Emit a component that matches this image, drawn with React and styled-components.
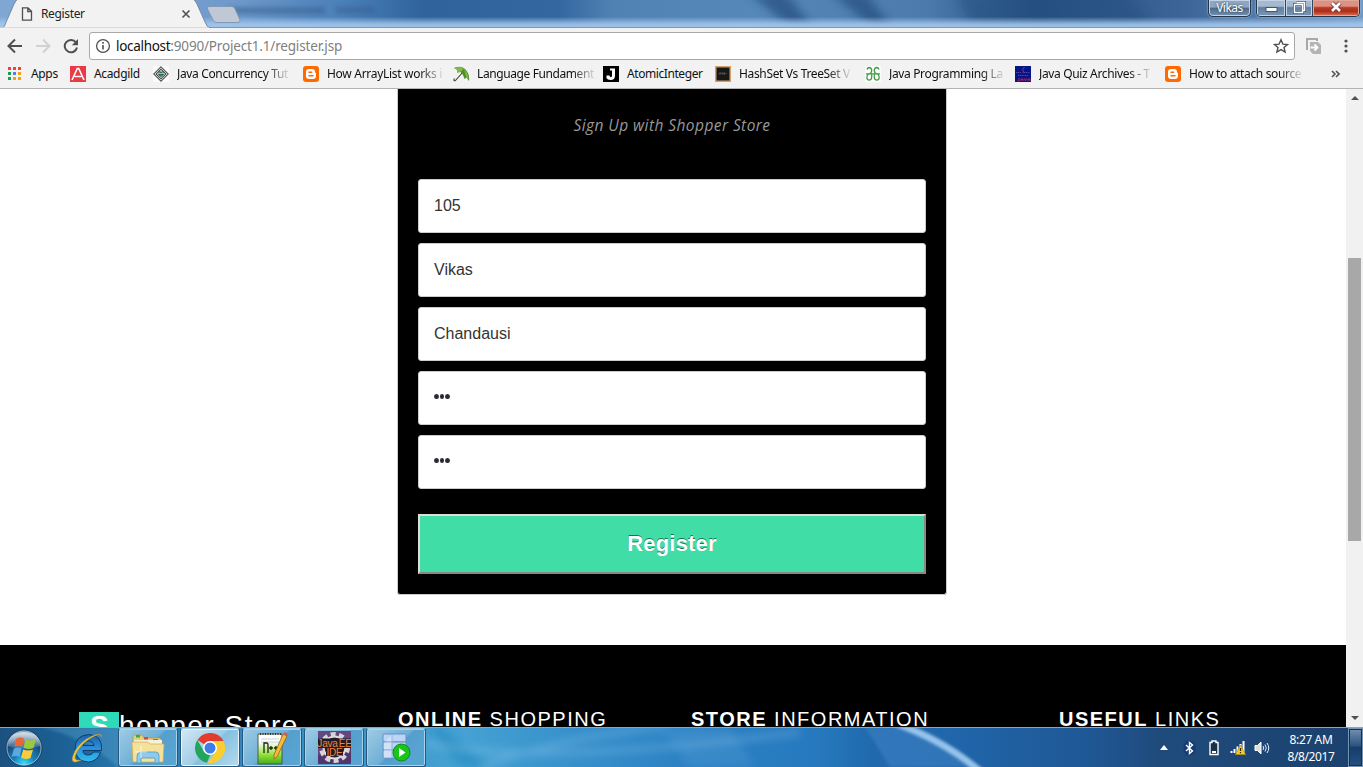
import React from 'react';
import styled, { createGlobalStyle } from 'styled-components';

const ui = '"Noto Sans", "Open Sans", sans-serif';
const arial = '"Liberation Sans", Arial, sans-serif';

const Global = createGlobalStyle`
  * { box-sizing: border-box; }
  html, body { margin: 0; padding: 0; background: #fff; overflow: hidden; }
  svg { display: block; }
`;

const Screen = styled.div`
  width: 1363px;
  height: 767px;
  display: flex;
  flex-direction: column;
  overflow: hidden;
  font-family: ${ui};
`;

/* ---------- window frame ---------- */
const TitleBar = styled.header`
  height: 28px;
  flex: none;
  display: grid;
  overflow: hidden;
  > * { grid-area: 1 / 1; }
`;
const TitleRow = styled.div`
  position: relative;
  display: flex;
  align-items: flex-start;
  height: 28px;
`;
const TabLabel = styled.div`
  width: 205px;
  height: 28px;
  padding: 0 14px 0 21px;
  display: flex;
  align-items: center;
  font-size: 12px;
  letter-spacing: -0.35px;
  color: #222;
  svg { flex: none; }
  span { flex: 1; padding-left: 8px; line-height: 26px; }
`;
const UserButton = styled.div`
  margin-left: auto;
  width: 43px;
  height: 17px;
  border: 1px solid #25364c;
  border-top: 0;
  border-radius: 0 0 5px 5px;
  box-shadow: inset 0 0 0 1px #c3d2e4, 0 0 2px #bcd3ec;
  background: linear-gradient(#8ea6c2 0 45%, #4c6a8c 50%, #7590ae);
  color: #fff;
  font-size: 12px;
  line-height: 15px;
  text-align: center;
  letter-spacing: -0.5px;
  text-shadow: 0 0 2px #1a2a3c;
`;
const WindowButtons = styled.div`
  display: flex;
  margin: 0 3px 0 5px;
  width: 104px;
  height: 17px;
  border: 1px solid #25364c;
  border-top: 0;
  border-radius: 0 0 5px 5px;
  box-shadow: 0 0 2px #bcd3ec;
  overflow: hidden;
`;
const WindowButton = styled.div`
  width: ${p => p.$w}px;
  display: grid;
  place-items: center;
  border-right: ${p => (p.$close ? 0 : 1)}px solid #33475f;
  box-shadow: inset 0 0 0 1px ${p => (p.$close ? '#e0a79b' : '#c3d2e4')};
  background: ${p => p.$close
    ? 'linear-gradient(#dc9183 0 38%, #b93a24 48%, #ad2c17 70%, #d9775b)'
    : 'linear-gradient(#a5bad1 0 38%, #637f9f 48%, #7b97b6)'};
`;

/* ---------- toolbar ---------- */
const Toolbar = styled.div`
  flex: none;
  height: 32px;
  padding: 4px 9px 0 7px;
  display: flex;
  background: #f2f2f2;
`;
const NavIcons = styled.div`
  display: flex;
  align-items: center;
  gap: 12px;
  width: 82px;
  height: 28px;
`;
const Omnibox = styled.div`
  width: 1206px;
  height: 28px;
  display: flex;
  align-items: center;
  padding: 0 5px;
  border: 1px solid #a9a9a9;
  border-radius: 3px;
  background: #fff;
`;
const Url = styled.div`
  flex: 1;
  padding-left: 5px;
  font-size: 13.5px;
  letter-spacing: -0.17px;
  line-height: 24px;
  color: #808080;
  b { font-weight: 400; color: #111; letter-spacing: -0.3px; }
`;
const ToolEnd = styled.div`
  display: flex;
  align-items: center;
  justify-content: space-between;
  height: 28px;
  flex: 1;
  padding: 0 6px 0 11px;
`;
const Bookmarks = styled.nav`
  flex: none;
  height: 29px;
  padding: 0 0 1px 7px;
  display: flex;
  align-items: center;
  background: #f2f2f2;
  border-bottom: 1px solid #b4b4b4;
`;
const Bookmark = styled.div`
  width: ${p => p.$w}px;
  flex: none;
  display: flex;
  align-items: center;
  gap: ${p => p.$gap || 7}px;
  svg { flex: none; }
`;
const BookmarkText = styled.span`
  white-space: nowrap;
  font-size: 12px;
  line-height: 18px;
  letter-spacing: ${p => p.$ls || -0.35}px;
  color: #111;
  ${p => p.$fade && 'mask-image: linear-gradient(90deg, #000 calc(100% - 22px), rgba(0, 0, 0, .12));'}
`;
const More = styled.div`
  margin-left: 20px;
`;

/* ---------- page ---------- */
const Viewport = styled.main`
  flex: none;
  height: 638px;
  display: flex;
  overflow: hidden;
`;
const Page = styled.div`
  width: 1346px;
  height: 638px;
  overflow: hidden;
  background: #fff;
`;
const Card = styled.section`
  width: 550px;
  height: 506px;
  margin: 0 0 50px 397px;
  padding: 0 20px 20px;
  display: flex;
  flex-direction: column;
  background: #000;
  border: 1px solid #ccc;
  border-top: 0;
  border-radius: 0 0 3px 3px;
`;
const Lead = styled.p`
  margin: 0;
  height: 90px;
  padding-top: 24px;
  text-align: center;
  font: italic 15.5px/25px "Open Sans", ${ui};
  letter-spacing: 0.42px;
  color: #999;
`;
const Field = styled.div`
  height: 54px;
  flex: none;
  margin-bottom: 10px;
  padding: 0 15px;
  border: 1px solid #ccc;
  border-radius: 3px;
  background: #fff;
  color: #333;
  font: 16px/51px ${arial};
`;
const Dots = styled.div`
  display: flex;
  gap: 1px;
  padding-top: 22px;
  i { width: 4.6px; height: 5px; border-radius: 50%; background: #2b2b33; }
`;
const Submit = styled.div`
  height: 60px;
  margin-top: 15px;
  flex: none;
  border: 2px solid;
  border-color: #ddd #888 #888 #ddd;
  background: #41dda6;
  color: #fff;
  text-align: center;
  font: bold 22px/55px ${arial};
  letter-spacing: 0.2px;
  text-shadow: 0 -1px 0 rgba(0, 0, 0, .5);
`;
const Footer = styled.footer`
  height: 83px;
  padding: 67px 0 0 79px;
  display: flex;
  background: #000;
  color: #fff;
  overflow: hidden;
`;
const Brand = styled.div`
  width: 319px;
  display: flex;
  font: 28px/28px ${arial};
  letter-spacing: 1.5px;
  b { width: 40px; height: 30px; padding-left: 11px; background: #2fdab8; letter-spacing: 0; }
`;
const FootHeading = styled.h4`
  width: ${p => p.$w}px;
  margin: 0;
  white-space: nowrap;
  font: 20px/15px ${arial};
  letter-spacing: 1.5px;
`;
const Scrollbar = styled.div`
  width: 17px;
  height: 638px;
  padding: 7px 2px;
  display: flex;
  flex-direction: column;
  align-items: center;
  background: #f1f1f1;
`;
const Thumb = styled.div`
  width: 13px;
  height: 283px;
  margin: 158px 0 auto;
  background: #a8a8a8;
`;

/* ---------- taskbar ---------- */
const Taskbar = styled.div`
  height: 40px;
  flex: none;
  display: grid;
  overflow: hidden;
  > * { grid-area: 1 / 1; }
`;
const TaskRow = styled.div`
  position: relative;
  display: flex;
  height: 40px;
  border-top: 1px solid #86a7c1;
`;
const Launch = styled.div`
  width: ${p => p.$w}px;
  padding-left: ${p => p.$pad || 0}px;
  height: 39px;
  display: grid;
  place-items: center;
`;
const TaskButton = styled.div`
  width: 60px;
  height: 39px;
  margin-right: 2px;
  display: grid;
  place-items: center;
  border: 1px solid #24587f;
  border-top-color: #9ecbe6;
  border-radius: 3px;
  box-shadow: inset 0 0 0 1px ${p => (p.$active ? '#eaf5fb' : '#a9d3ea')};
  background: ${p => (p.$active
    ? 'linear-gradient(135deg, #d3e8f4, #a0cde6 48%, #86bfe0 52%, #b4dbee)'
    : 'linear-gradient(135deg, #9fcbe4, #6fb0d7 48%, #549fce 52%, #5aa6d3)')};
`;
const Tray = styled.div`
  margin-left: auto;
  display: flex;
  align-items: center;
`;
const TrayIcon = styled.div`
  width: ${p => p.$w}px;
`;
const Clock = styled.div`
  width: 74px;
  text-align: center;
  color: #fff;
  font-size: 12px;
  line-height: 17px;
  letter-spacing: -0.38px;
`;
const ShowDesktop = styled.div`
  width: 15px;
  height: 39px;
  border: 1px solid #7795b5;
  box-shadow: inset 0 0 0 1px #14304f;
  background: linear-gradient(#7290b0, #2c5582 45%, #173e6c 50%, #24507f);
`;

const FrameArt = () => (
  <svg width="1363" height="28" viewBox="0 0 1363 28">
    <defs>
      <linearGradient id="sky" x2="1">
        <stop offset="0" stopColor="#7fa8d4" /><stop offset=".17" stopColor="#6f9acb" />
        <stop offset=".25" stopColor="#4b80b8" /><stop offset=".31" stopColor="#30639b" />
        <stop offset=".41" stopColor="#3467a0" /><stop offset=".45" stopColor="#5082b4" />
        <stop offset=".55" stopColor="#5688b9" /><stop offset=".68" stopColor="#4c7aac" />
        <stop offset=".76" stopColor="#264f82" /><stop offset=".87" stopColor="#3d6598" />
        <stop offset="1" stopColor="#6f98c5" />
      </linearGradient>
      <linearGradient id="glow" x2="0" y2="1">
        <stop offset=".6" stopColor="#a8cdf3" stopOpacity="0" /><stop offset=".86" stopColor="#a5c8ec" stopOpacity=".85" />
        <stop offset="1" stopColor="#9fc4ea" />
      </linearGradient>
      <filter id="soft" x="-30%" y="-50%" width="160%" height="200%"><feGaussianBlur stdDeviation="5" /></filter>
      <filter id="soft2" x="-10%" y="-80%" width="120%" height="260%"><feGaussianBlur stdDeviation="2.2" /></filter>
    </defs>
    <rect width="1363" height="28" fill="url(#sky)" />
    <g filter="url(#soft)" fill="#214d7e">
      <path d="M748 -8h38l32 42h-20z" opacity=".7" /><path d="M830 -8h35l32 42h-17z" opacity=".7" />
      <path d="M955 -8h170l35 42H975z" opacity=".5" />
    </g>
    <g filter="url(#soft2)" fill="#345d8f" opacity=".5">
      <rect x="228" y="7" width="97" height="7" /><rect x="336" y="7" width="39" height="6" />
    </g>
    <rect width="1363" height="28" fill="url(#glow)" />
    <rect y="27" width="1363" height="1" fill="#7898bc" />
    <path d="M2 28C5 27 5 24 7 20L14 4Q16 0 18 -1H193Q195 0 197 4L205 22Q207 28 211 28Z" fill="#f2f2f2" stroke="#718ba9" />
    <rect x="0" y="27.4" width="209" height="1" fill="#f2f2f2" />
    <path d="M209 6.5H232Q234 6.500 235 9L240 20Q240.500 22.500 238 22.500H217Q214 22.500 213 20L207.500 9Q207 6.500 209 6.500Z" fill="#bfc8d4" stroke="#8199b5" />
  </svg>
);

const Blogger = () => (
  <svg width="16" height="16" viewBox="0 0 16 16">
    <rect width="16" height="16" rx="3" fill="#ff6a00" />
    <path d="M6 3H9Q12 3 12 6Q12 7 13 7V10Q13 13 10 13H6Q3 13 3 10V6Q3 3 6 3Z" fill="#fff" />
    <path d="M6 6.200H8.600M6 9.800H10" stroke="#ff6a00" strokeWidth="1.500" strokeLinecap="round" />
  </svg>
);
const AppsIcon = () => (
  <svg width="16" height="16" viewBox="0 0 16 16">
    {['#e8453c', '#e8453c', '#e8453c', '#1d9b57', '#4285f4', '#f2a30b', '#1d9b57', '#f2a30b', '#f2a30b'].map((c, i) => (
      <rect key={i} x={1 + (i % 3) * 5} y={1 + Math.floor(i / 3) * 5} width="3" height="3" fill={c} />
    ))}
  </svg>
);
const Acadgild = () => (
  <svg width="16" height="16" viewBox="0 0 16 16">
    <rect width="16" height="16" fill="#e83b46" />
    <path d="M2 14L7.300 2.500H8.700L14 14M4.500 10.500H11.500" fill="none" stroke="#fff" strokeWidth="1.600" />
  </svg>
);
const Concurrency = () => (
  <svg width="16" height="16" viewBox="0 0 16 16">
    <rect width="16" height="16" fill="#fbfbfb" />
    <path d="M8 .8L15.200 8L8 15.200L.8 8Z" fill="#e3e6e4" stroke="#555" strokeWidth="1.100" />
    <path d="M8 3L13 8L8 13L3 8Z" fill="#a3b7ac" stroke="#4b5750" />
    <path d="M5.500 6.500L7 5.500L8 7L9.500 5.500L11 6.500M5.500 8.500Q8 12 10.500 8.500Z" stroke="#255b42" strokeWidth=".8" fill="#568b70" />
  </svg>
);
const Umbrella = () => (
  <svg width="17" height="16" viewBox="0 0 17 16">
    <path d="M1.500 12.500Q0 15 2.200 14.800L10 6" fill="none" stroke="#3c4632" strokeWidth="1.100" />
    <path d="M1 2Q8-1 12 3Q17 8 16 15L13.500 11.500L11.500 13L10 9L7.500 6L4 6.500L4.500 4Z" fill="#4f9128" />
    <path d="M1 2Q7 0 11 2.500L7.500 6L4 6.500L4.500 4ZM11 3Q15 7 15.500 13.500L13.500 11.500Z" fill="#83b94c" />
  </svg>
);
const JIcon = () => (
  <svg width="16" height="16" viewBox="0 0 16 16">
    <rect width="16" height="16" fill="#000" />
    <path d="M7 2.500H12V9.500Q12 14 7.500 14Q4.500 14 3.500 12V9.500H6.500Q6.700 11.200 7.800 11.200Q9 11.200 9 9.500V4.500H7Z" fill="#fff" />
  </svg>
);
const Chip = () => (
  <svg width="16" height="16" viewBox="0 0 16 16">
    <rect width="16" height="16" fill="#d2a06a" /><rect x="1.500" y="1.500" width="13" height="13" fill="#171717" />
    <path d="M4 8.500L5 6.500L6 8.500M7 6.500V8.500M8 8.500V6.500L9.500 8.500V6.500M10.500 7.500H12" stroke="#777" strokeWidth=".6" fill="none" />
  </svg>
);
const Geeks = () => (
  <svg width="16" height="16" viewBox="0 0 16 16">
    <rect width="16" height="16" fill="#fbfdfb" />
    <path d="M2 3.500Q2.500 1.500 4.500 1.500Q6.700 2 6.700 4.500Q6.500 7.500 4 7.800H1H15H12Q9.500 7.500 9.300 4.500Q9.300 2 11.500 1.500Q13.500 1.500 14 3.500M4 7.800Q1.800 9 1.800 11.500Q2 14.200 4.200 14.200Q6.700 14 6.700 11V7.800M12 7.800Q14.200 9 14.200 11.500Q14 14.200 11.800 14.200Q9.300 14 9.300 11V7.800" fill="none" stroke="#459b4a" strokeWidth="1.300" />
  </svg>
);
const Quiz = () => (
  <svg width="16" height="16" viewBox="0 0 16 16">
    <rect width="16" height="16" fill="#071487" />
    <path d="M9.500 1Q6 4 8.500 5.500Q9 6.500 7.500 7" fill="none" stroke="#c22b45" />
    <path d="M1 6.500H6M9 6.500H15M3 9.500H13" stroke="#4650ab" strokeWidth="1.200" strokeDasharray="1.200 .6" />
    <path d="M4 12V15H2.500M6 15V13H8V15M9.500 12.500L10.500 15L11.500 12.500M13 15V13H15V15" fill="none" stroke="#c32353" />
  </svg>
);

const StartOrb = () => (
  <svg width="40" height="38" viewBox="0 0 40 38">
    <defs>
      <radialGradient id="orb" cx=".5" cy=".95" r=".85"><stop offset="0" stopColor="#37e4ff" /><stop offset=".35" stopColor="#1683bd" /><stop offset=".75" stopColor="#174a7b" /><stop offset="1" stopColor="#6185a3" /></radialGradient>
      <linearGradient id="gloss" x2="0" y2="1"><stop stopColor="#fff" stopOpacity=".75" /><stop offset="1" stopColor="#fff" stopOpacity=".12" /></linearGradient>
    </defs>
    <circle cx="20" cy="19" r="18" fill="url(#orb)" stroke="#183f61" />
    <circle cx="20" cy="19" r="17" fill="none" stroke="#a7cadc" strokeWidth=".8" />
    <path d="M4 17Q5 3 20 3Q35 3 36 17Q20 22 4 17Z" fill="url(#gloss)" />
    <path d="M12 10Q16 7.500 20 9.500L18 18Q14.500 16 10.500 18Z" fill="#ed6533" />
    <path d="M21.500 10.300Q26 12.500 32 10.500L29.500 19Q24 21 19.500 18.800Z" fill="#9bc83d" />
    <path d="M10 19.500Q14 17.500 17.600 19.500L15.500 28Q12 26 7.500 28Z" fill="#5aa8df" />
    <path d="M19.200 20.400Q23 22.500 29 20.800L26.500 29Q21.500 31 17 28.800Z" fill="#fccb3a" />
  </svg>
);
const IE = () => (
  <svg width="34" height="34" viewBox="0 0 34 34">
    <defs><linearGradient id="ie" x2="0" y2="1"><stop stopColor="#1b62ad" /><stop offset=".5" stopColor="#2b8fd8" /><stop offset="1" stopColor="#2fc0f3" /></linearGradient></defs>
    <path d="M30.500 21H23.500Q22 24 18.500 24Q13 24 13 19.500H31.500Q33 4 18.500 3.500Q5 4.500 5 18Q6 30.500 18.500 31Q28 30 30.500 21ZM13 14.500Q14 10 18.500 10Q23 10 24 14.500Z" fill="url(#ie)" stroke="#0b3568" strokeWidth=".9" />
    <path d="M32 6Q31 1 22 5Q11 10 5 20Q-1 32 6 31Q10 30 13 28Q6 31 5 27Q5 22 12 14Q19 7 27 4Q30 3 32 6Z" fill="#f4c53d" stroke="#b9892a" strokeWidth=".4" />
  </svg>
);
const Folder = () => (
  <svg width="34" height="32" viewBox="0 0 34 32">
    <path d="M2 5L3 3H11L13 6H29L31 9V29H2Z" fill="#e9cd78" stroke="#b49344" strokeWidth=".7" />
    <rect x="5" y="3" width="4" height="2.500" fill="#2caf47" /><rect x="13" y="5" width="4" height="2.500" fill="#d94b35" /><rect x="22" y="7" width="5" height="2.500" fill="#3689cf" />
    <path d="M3 8H31V12H3Z" fill="#f5f1dd" /><path d="M1 10H17L19 12H33L32 30H2Z" fill="#f6e19a" stroke="#cdae5b" strokeWidth=".7" />
    <path d="M6 31V24Q6 20 10 20H25Q28 20 28 24V31H24V26H10V31Z" fill="#8ccbed" stroke="#4d9bc8" strokeWidth=".8" />
    <path d="M10 14V26M4 20H16" stroke="#fff" opacity=".7" />
  </svg>
);
const Chrome = () => (
  <svg width="30" height="30" viewBox="0 0 30 30">
    <path d="M15 15L2.500 7A15 15 0 0 1 28.500 8H15Z" fill="#e33b2e" />
    <path d="M2.300 7L9 18.500L15 22L12 29.700A15 15 0 0 1 2.300 7Z" fill="#22a55a" />
    <path d="M15 8H28.300A15 15 0 0 1 12.500 29.800L21 18.500Z" fill="#fccd2f" />
    <circle cx="15" cy="15" r="7" fill="#fff" /><circle cx="15" cy="15" r="5.500" fill="#3f7de8" />
  </svg>
);
const Notepad = () => (
  <svg width="32" height="34" viewBox="0 0 32 34">
    <defs><linearGradient id="np" x2="0" y2="1"><stop offset=".25" stopColor="#fff" /><stop offset=".7" stopColor="#94de39" /><stop offset="1" stopColor="#3fae16" /></linearGradient></defs>
    <path d="M2 3H26V33H2Z" fill="url(#np)" stroke="#4d5a48" /><path d="M4 3H25" stroke="#333" strokeWidth="2" strokeDasharray="1 1.500" />
    <path d="M5 8H23M5 11H23" stroke="#c5d0da" />
    <path d="M8 22V12H11Q12 12 12 14V22M13 17H17M15 15V19M18 17H22M20 15V19" fill="none" stroke="#182510" strokeWidth="1.300" />
    <path d="M27 3L31 5L21 26L18 28V24Z" fill="#f5bd36" stroke="#916020" strokeWidth=".8" /><path d="M27 3L28.500 1L32 3L31 5Z" fill="#d25b61" />
  </svg>
);
const ArtText = styled.text`
  font: ${p => p.$size}px "Liberation Sans", Arial, sans-serif;
  word-spacing: -1.5px;
  letter-spacing: -0.2px;
`;
const JavaEE = () => (
  <svg width="33" height="33" viewBox="0 0 33 33">
    <rect width="33" height="33" rx="1" fill="#50356f" /><path d="M0 0H33V15Q15 11 0 25Z" fill="#65477f" />
    <circle cx="16.500" cy="16.500" r="13.500" fill="none" stroke="#d5d5d5" strokeWidth="4" strokeDasharray="5 3.480" />
    <circle cx="16.500" cy="16.500" r="11" fill="#2b2229" stroke="#ddd" strokeWidth="2" />
    <rect y="7.500" width="33" height="9.500" fill="#241a25" />
    <rect x="8" y="16" width="17" height="9" fill="#241a25" />
    <ArtText $size={10} x="16.500" y="15.500" textAnchor="middle" fill="#f38336">Java EE</ArtText>
    <ArtText $size={10} x="16.500" y="24.500" textAnchor="middle" fill="#f38336">IDE</ArtText>
  </svg>
);
const ServerRun = () => (
  <svg width="32" height="32" viewBox="0 0 32 32">
    {[2, 10, 18].map(y => <rect key={y} x="3" y={y} width="23" height="8" rx="1" fill="#bcd5f5" stroke="#668dca" />)}
    <path d="M4 11L12 3V26H4Z" fill="#fff" opacity=".3" /><path d="M12 3V26" stroke="#91b4e4" />
    <circle cx="21.500" cy="20.500" r="8.500" fill="#19c51b" stroke="#0b8e10" /><path d="M19 16L25.500 20.500L19 25Z" fill="#fff" />
  </svg>
);

const TaskArt = () => (
  <svg width="1363" height="40" viewBox="0 0 1363 40">
    <defs>
      <linearGradient id="tb" x2="1">
        <stop stopColor="#1b5181" /><stop offset=".05" stopColor="#1c6296" /><stop offset=".09" stopColor="#2876ac" />
        <stop offset=".28" stopColor="#4199cb" /><stop offset=".34" stopColor="#45a2d3" /><stop offset=".42" stopColor="#3790cb" />
        <stop offset=".5" stopColor="#2c82c4" /><stop offset=".6" stopColor="#2679be" /><stop offset=".64" stopColor="#2169ad" /><stop offset=".7" stopColor="#2066aa" />
        <stop offset=".8" stopColor="#1f5795" /><stop offset=".85" stopColor="#1f4b7c" /><stop offset="1" stopColor="#1b416d" />
      </linearGradient>
      <filter id="tb1" x="-10%" y="-50%" width="120%" height="200%"><feGaussianBlur stdDeviation="1.500" /></filter>
      <filter id="tb4" x="-10%" y="-50%" width="120%" height="200%"><feGaussianBlur stdDeviation="4" /></filter>
    </defs>
    <rect width="1363" height="40" fill="url(#tb)" />
    <path d="M40 0Q85 10 118 40H140V0Z" fill="#69b5dc" opacity=".3" filter="url(#tb1)" />
    <path d="M430 0L460 40H490L440 0Z" fill="#187db8" opacity=".4" filter="url(#tb4)" />
    <g filter="url(#tb4)" fill="none" stroke="#a8d7f4" strokeWidth="5" opacity=".3">
      <path d="M425 16Q540 40 800 5" /><path d="M480 40Q570 8 665 0" />
    </g>
    <path d="M660 0H730L755 40H690Z" fill="#8ac2e9" opacity=".14" filter="url(#tb4)" />
    <path d="M865 0L890 40H970Q935 12 905 0Z" fill="#4385c8" opacity=".5" filter="url(#tb1)" />
    <path d="M895 -4Q945 14 982 46" fill="none" stroke="#a2cdf3" strokeWidth="7" opacity=".9" filter="url(#tb1)" />
  </svg>
);

const bookmarks = [
  { icon: <AppsIcon />, text: 'Apps', w: 63, gap: 8 },
  { icon: <Acadgild />, text: 'Acadgild', w: 83, gap: 8 },
  { icon: <Concurrency />, text: 'Java Concurrency Tut', w: 150, fade: true, gap: 8 },
  { icon: <Blogger />, text: 'How ArrayList works i', w: 150, fade: true, gap: 8, ls: -0.3 },
  { icon: <Umbrella />, text: 'Language Fundament', w: 150, fade: true, ls: -0.4 },
  { icon: <JIcon />, text: 'AtomicInteger', w: 112, gap: 8, ls: -0.42 },
  { icon: <Chip />, text: 'HashSet Vs TreeSet V', w: 150, fade: true, gap: 8 },
  { icon: <Geeks />, text: 'Java Programming La', w: 150, fade: true, gap: 8 },
  { icon: <Quiz />, text: 'Java Quiz Archives - T', w: 150, fade: true, gap: 8 },
  { icon: <Blogger />, text: 'How to attach source', w: 146, fade: true, gap: 8 },
];

export default function App() {
  return (
    <Screen>
      <Global />
      <TitleBar>
        <FrameArt />
        <TitleRow>
          <TabLabel>
            <svg width="12" height="14" viewBox="0 0 12 14"><path d="M1.500 .8H7L10.500 4.300V13.200H1.500ZM6.800 1V4.500H10.300" fill="none" stroke="#505050" strokeWidth="1.300" /></svg>
            <span>Register</span>
            <svg width="10" height="10" viewBox="0 0 10 10"><path d="M1.500 1.500L8.500 8.500M8.500 1.500L1.500 8.500" stroke="#555" strokeWidth="1.700" /></svg>
          </TabLabel>
          <UserButton>Vikas</UserButton>
          <WindowButtons>
            <WindowButton $w={29}><svg width="13" height="16"><rect x="1" y="7.500" width="11" height="4" fill="#fff" stroke="#44566f" /></svg></WindowButton>
            <WindowButton $w={27}><svg width="14" height="16" viewBox="0 0 14 16"><path d="M4.500 2.500H12.500V10.500H10M2.500 4.500H10.500V12.500H2.500Z" stroke="#44566f" strokeWidth="3" fill="none" /><path d="M4.500 2.500H12.500V10.500H10M2.500 4.500H10.500V12.500H2.500Z" stroke="#fff" strokeWidth="1.500" fill="none" /></svg></WindowButton>
            <WindowButton $w={46} $close><svg width="14" height="17" viewBox="0 0 14 17"><path d="M3 3L11 11M11 3L3 11" stroke="#703c3e" strokeWidth="4.500" /><path d="M3 3L11 11M11 3L3 11" stroke="#fff" strokeWidth="2.600" /></svg></WindowButton>
          </WindowButtons>
        </TitleRow>
      </TitleBar>

      <Toolbar>
        <NavIcons>
          <svg width="16" height="16" viewBox="0 0 16 16"><path d="M15 8H2M8 1.500L1.500 8L8 14.500" fill="none" stroke="#505050" strokeWidth="2" /></svg>
          <svg width="16" height="16" viewBox="0 0 16 16"><path d="M1 8H14M8 1.500L14.500 8L8 14.500" fill="none" stroke="#d1d1d1" strokeWidth="2" /></svg>
          <svg width="16" height="16" viewBox="0 0 16 16"><path d="M13 4.500A6.200 6.200 0 1 0 14 9.500" fill="none" stroke="#505050" strokeWidth="2" /><path d="M15 1V7.200H8.800Z" fill="#505050" /></svg>
        </NavIcons>
        <Omnibox>
          <svg width="16" height="16" viewBox="0 0 16 16"><circle cx="8" cy="8" r="6.400" fill="none" stroke="#505050" strokeWidth="1.300" /><path d="M8 7V11.500M8 4V5.700" stroke="#505050" strokeWidth="1.600" /></svg>
          <Url><b>localhost</b>:9090/Project1.1/register.jsp</Url>
          <svg width="16" height="16" viewBox="0 0 16 16"><path d="M8 1.800L9.900 6.100L14.500 6.500L11 9.500L12.100 14L8 11.600L3.900 14L5 9.500L1.500 6.500L6.100 6.100Z" fill="none" stroke="#505050" strokeWidth="1.400" /></svg>
        </Omnibox>
        <ToolEnd>
          <svg width="16" height="17" viewBox="0 0 16 17"><path d="M1 12V1H11V3" fill="none" stroke="#a8a8a8" strokeWidth="2" /><path d="M4 4H12L15 7V16H7L4 13Z" fill="#b4b4b4" /><path d="M4.500 9.500H11M8.500 6.500L11.500 9.500L8.500 12.500" stroke="#fff" strokeWidth="1.800" fill="none" /></svg>
          <svg width="4" height="14" viewBox="0 0 4 14" fill="#505050"><circle cx="2" cy="2" r="1.600" /><circle cx="2" cy="7" r="1.600" /><circle cx="2" cy="12" r="1.600" /></svg>
        </ToolEnd>
      </Toolbar>

      <Bookmarks>
        {bookmarks.map((b, i) => (
          <Bookmark key={i} $w={b.w} $gap={b.gap}>
            {b.icon}
            <BookmarkText $ls={b.ls} $fade={b.fade}>{b.text}</BookmarkText>
          </Bookmark>
        ))}
        <More><svg width="9" height="8" viewBox="0 0 9 8"><path d="M1 1L4 4L1 7M5 1L8 4L5 7" fill="none" stroke="#555" strokeWidth="1.600" /></svg></More>
      </Bookmarks>

      <Viewport>
        <Page>
          <Card>
            <Lead>Sign Up with Shopper Store</Lead>
            <Field>105</Field>
            <Field>Vikas</Field>
            <Field>Chandausi</Field>
            <Field><Dots><i /><i /><i /></Dots></Field>
            <Field><Dots><i /><i /><i /></Dots></Field>
            <Submit>Register</Submit>
          </Card>
          <Footer>
            <Brand><b>S</b>hopper Store</Brand>
            <FootHeading $w={293}><b>ONLINE</b> SHOPPING</FootHeading>
            <FootHeading $w={368}><b>STORE</b> INFORMATION</FootHeading>
            <FootHeading $w={200}><b>USEFUL</b> LINKS</FootHeading>
          </Footer>
        </Page>
        <Scrollbar>
          <svg width="8" height="4" viewBox="0 0 8 4"><path d="M0 4L4 0L8 4Z" fill="#505050" /></svg>
          <Thumb />
          <svg width="8" height="4" viewBox="0 0 8 4"><path d="M0 0L4 4L8 0Z" fill="#505050" /></svg>
        </Scrollbar>
      </Viewport>

      <Taskbar>
        <TaskArt />
        <TaskRow>
          <Launch $w={48}><StartOrb /></Launch>
          <Launch $w={70} $pad={7}><IE /></Launch>
          <TaskButton><Folder /></TaskButton>
          <TaskButton $active><Chrome /></TaskButton>
          <TaskButton><Notepad /></TaskButton>
          <TaskButton><JavaEE /></TaskButton>
          <TaskButton><ServerRun /></TaskButton>
          <Tray>
            <TrayIcon $w={23}><svg width="8" height="5"><path d="M0 5L4 0L8 5Z" fill="#fff" /></svg></TrayIcon>
            <TrayIcon $w={26}><svg width="13" height="16" viewBox="0 0 13 16"><rect x=".5" y=".5" width="12" height="15" rx="6" fill="#173b72" /><path d="M3 5L9.500 11L6.500 13.500V2.500L9.500 5L3 11" fill="none" stroke="#fff" strokeWidth="1.400" /></svg></TrayIcon>
            <TrayIcon $w={21}><svg width="10" height="16" viewBox="0 0 10 16"><path d="M1 2.500H3V1H7V2.500H9V14.500H1Z" fill="#1a304a" stroke="#fff" strokeWidth="1.400" /><path d="M3 12H7" stroke="#fff" strokeWidth="2" /></svg></TrayIcon>
            <TrayIcon $w={24}><svg width="16" height="15" viewBox="0 0 16 15"><path d="M1.500 13V11M4.500 13V9M7.500 13V6.500M10.500 13V4M13.500 13V1" stroke="#fff" strokeWidth="2" /><path d="M10.500 5L15.500 14.500H5.500Z" fill="#f8cf20" stroke="#b68b12" strokeWidth=".7" /><path d="M10.500 8V11M10.500 12V13.200" stroke="#332700" strokeWidth="1.300" /></svg></TrayIcon>
            <TrayIcon $w={20}><svg width="16" height="14" viewBox="0 0 16 14"><path d="M1 4.500H3.500L7 1V13L3.500 9.500H1Z" fill="#ddd" stroke="#fff" /><path d="M9 5Q10.500 7 9 9M11 3.500Q13.500 7 11 10.500M13 2Q16.500 7 13 12" fill="none" stroke="#e4eef8" /></svg></TrayIcon>
            <Clock>8:27 AM<br />8/8/2017</Clock>
          </Tray>
          <ShowDesktop />
        </TaskRow>
      </Taskbar>
    </Screen>
  );
}
